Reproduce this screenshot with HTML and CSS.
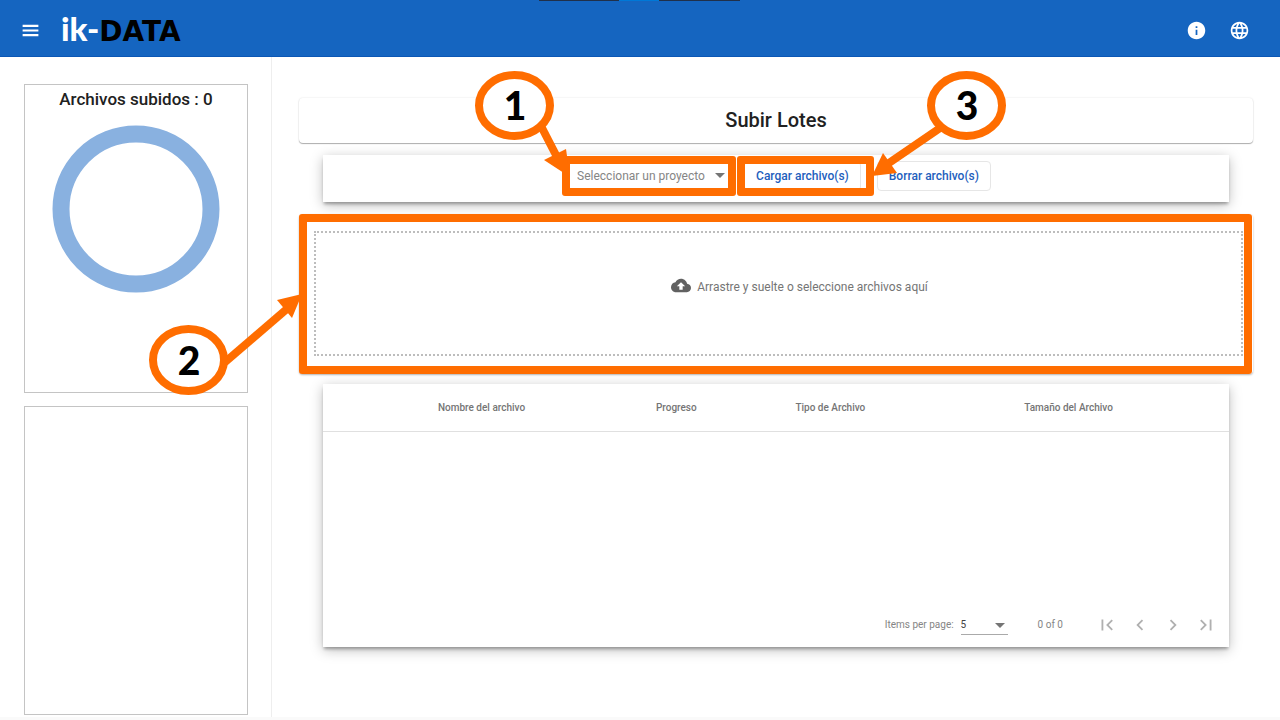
FILE: index.html
```html
<!DOCTYPE html>
<html lang="es">
<head>
<meta charset="utf-8">
<meta name="viewport" content="width=device-width, initial-scale=1">
<title>ik-DATA - Subir Lotes</title>
<link rel="stylesheet" href="styles.css">
</head>
<body>
<header class="topbar">
  <div class="window-tab"></div>
  <button class="icon-button" type="button" aria-label="Menu">
    <svg class="icon" viewBox="0 0 24 24"><path d="M3 18.500h18v-2.500H3v2.500zm0-5.250h18v-2.500H3v2.500zm0-7.750v2.500h18V5.500H3z"/></svg>
  </button>
  <a class="logo" href="#"><span class="logo-ik">ik-</span><span class="logo-data">DATA</span></a>
  <nav class="topbar-actions">
    <button class="icon-button" type="button" aria-label="Info">
      <svg class="icon" viewBox="0 0 24 24"><path d="M12 2C6.48 2 2 6.48 2 12s4.48 10 10 10 10-4.480 10-10S17.520 2 12 2zm1 15h-2v-6h2v6zm0-8h-2V7h2v2z"/></svg>
    </button>
    <button class="icon-button" type="button" aria-label="Idioma">
      <svg class="icon globe" viewBox="0 0 24 24"><path d="M11.990 2C6.470 2 2 6.480 2 12s4.470 10 9.990 10C17.520 22 22 17.520 22 12S17.520 2 11.990 2zm6.930 6h-2.950c-.32-1.250-.78-2.450-1.380-3.560 1.840.63 3.370 1.910 4.330 3.560zM12 4.040c.83 1.200 1.480 2.530 1.910 3.960h-3.820c.43-1.430 1.080-2.760 1.910-3.960zM4.260 14C4.100 13.360 4 12.690 4 12s.1-1.360.26-2h3.380c-.08.66-.14 1.320-.14 2s.06 1.340.14 2H4.260zm.82 2h2.950c.32 1.250.78 2.450 1.380 3.560-1.840-.63-3.370-1.900-4.330-3.560zm2.950-8H5.080c.96-1.660 2.490-2.930 4.330-3.560C8.810 5.550 8.350 6.750 8.030 8zM12 19.960c-.83-1.200-1.480-2.530-1.910-3.960h3.820c-.43 1.430-1.080 2.760-1.910 3.960zM14.340 14H9.660c-.09-.66-.16-1.320-.16-2s.07-1.350.16-2h4.680c.09.65.16 1.320.16 2s-.07 1.340-.16 2zm.25 5.560c.6-1.110 1.060-2.310 1.380-3.560h2.950c-.96 1.650-2.490 2.930-4.330 3.560zM16.360 14c.08-.66.14-1.320.14-2s-.06-1.340-.14-2h3.380c.16.64.26 1.310.26 2s-.1 1.360-.26 2h-3.380z"/></svg>
    </button>
  </nav>
</header>

<div class="page">
  <aside class="sidebar">
    <section class="panel">
      <h2 class="panel-title">Archivos subidos : 0</h2>
      <svg class="donut" viewBox="0 0 168 168" role="img" aria-label="0 archivos"><circle cx="84" cy="84" r="75"/></svg>
    </section>
    <section class="panel"></section>
  </aside>

  <main class="content">
    <h1 class="title-card">Subir Lotes</h1>

    <form class="toolbar card">
      <div class="target project">
        <select class="project-select" aria-label="Proyecto">
          <option>Seleccionar un proyecto</option>
        </select>
        <svg class="caret" viewBox="0 0 10 5"><path d="M0 0h10L5 5z"/></svg>
        <div class="highlight highlight-project">
          <svg class="callout callout-one" viewBox="474 71 100 110">
            <path class="arrow-line" d="M540 126L557 159"/>
            <path class="arrow-head" d="M543 160L565 149L569 177z"/>
            <ellipse cx="513.500" cy="105.500" rx="35.500" ry="30.500"/>
            <text x="514" y="120">1</text>
          </svg>
        </div>
      </div>
      <div class="target">
        <button class="button" type="button">Cargar archivo(s)</button>
        <div class="highlight highlight-upload">
          <svg class="callout callout-three" viewBox="866 71 140 110">
            <path class="arrow-line" d="M943 126L886 165"/>
            <path class="arrow-head" d="M883 153L897 173L872 176z"/>
            <ellipse cx="966.500" cy="105.500" rx="35.500" ry="30.500"/>
            <text x="967" y="120">3</text>
          </svg>
        </div>
      </div>
      <div class="target">
        <button class="button" type="button">Borrar archivo(s)</button>
      </div>
    </form>

    <section class="drop-card">
      <button class="dropzone" type="button">
        <svg class="icon" viewBox="0 0 24 24"><path d="M19.350 10.040C18.670 6.590 15.640 4 12 4 9.110 4 6.600 5.640 5.350 8.040 2.340 8.360 0 10.910 0 14c0 3.310 2.690 6 6 6h13c2.760 0 5-2.240 5-5 0-2.640-2.050-4.780-4.650-4.960zM14 13v4h-4v-4H7l5-5 5 5h-3z"/></svg>
        <span>Arrastre y suelte o seleccione archivos aquí</span>
      </button>
      <div class="highlight highlight-drop">
        <svg class="callout callout-two" viewBox="149 290 154 106">
          <path class="arrow-line" d="M224 363L288 308"/>
          <path class="arrow-head" d="M277 300L292 318L302 294z"/>
          <ellipse cx="188.500" cy="360" rx="35.500" ry="31"/>
          <text x="189" y="375">2</text>
        </svg>
      </div>
    </section>

    <section class="files card">
      <table class="files-table">
        <colgroup><col class="col-name"><col class="col-progress"><col class="col-type"><col class="col-size"></colgroup>
        <thead>
          <tr><th>Nombre del archivo</th><th>Progreso</th><th>Tipo de Archivo</th><th>Tamaño del Archivo</th></tr>
        </thead>
        <tbody></tbody>
      </table>
      <footer class="paginator">
        <label for="page-size">Items per page:</label>
        <div class="page-size">
          <select id="page-size"><option>5</option></select>
          <svg class="caret" viewBox="0 0 10 5"><path d="M0 0h10L5 5z"/></svg>
        </div>
        <span class="range">0 of 0</span>
        <button class="page-button" type="button" aria-label="Primera"><svg viewBox="0 0 24 24"><path d="M18.410 16.590L13.820 12l4.590-4.590L17 6l-6 6 6 6zM6 6h2v12H6z"/></svg></button>
        <button class="page-button" type="button" aria-label="Anterior"><svg viewBox="0 0 24 24"><path d="M15.410 7.410L14 6l-6 6 6 6 1.410-1.410L10.830 12z"/></svg></button>
        <button class="page-button" type="button" aria-label="Siguiente"><svg viewBox="0 0 24 24"><path d="M10 6L8.590 7.410 13.170 12l-4.580 4.590L10 18l6-6z"/></svg></button>
        <button class="page-button" type="button" aria-label="Última"><svg viewBox="0 0 24 24"><path d="M5.590 7.410L10.180 12l-4.590 4.590L7 18l6-6-6-6zM16 6h2v12h-2z"/></svg></button>
      </footer>
    </section>
  </main>
</div>
</body>
</html>
```

FILE: styles.css
```css
* { box-sizing: border-box; }

body {
  margin: 0;
  min-height: 100vh;
  display: flex;
  flex-direction: column;
  padding-bottom: 3px;
  background: #fafafa;
  color: #212121;
  font-family: Roboto, "Liberation Sans", sans-serif;
}

button, select { font: inherit; color: inherit; }
button { padding: 0; border: 0; background: none; cursor: pointer; }
svg { display: block; }

/* Top bar */
.topbar {
  position: relative;
  display: flex;
  align-items: center;
  min-height: 57px;
  padding: 4px 30px 0 20px;
  background: #1565c0;
  border-bottom: 1px solid #0b57b5;
  color: #fff;
}
.window-tab {
  position: absolute;
  top: 0;
  left: 50%;
  width: 201px;
  height: 1px;
  margin-left: -101px;
  background: linear-gradient(90deg, #20304a 80px, #0078d7 80px 120px, #20304a 120px);
}
.icon-button { color: #fff; }
.icon { width: 21px; height: 21px; fill: currentColor; }
.logo {
  display: flex;
  align-items: baseline;
  margin-left: 20px;
  line-height: 40px;
  text-decoration: none;
}
.logo-ik { color: #fff; font: 900 33px/40px Lato, sans-serif; }
.logo-data { color: #000; font: 700 28px/40px "DejaVu Sans", sans-serif; }
.topbar-actions { display: flex; gap: 22px; margin-left: auto; }

/* Page frame */
.page { flex: 1; display: flex; background: #fff; }
.sidebar {
  flex: 0 0 272px;
  display: flex;
  flex-direction: column;
  gap: 13px;
  padding: 27px 23px 2px 24px;
  border-right: 1px solid #eee;
}
.panel {
  flex: 1;
  display: flex;
  flex-direction: column;
  align-items: center;
  border: 1px solid #c4c4c4;
}
.panel-title { margin: 4px 0 16px; font-size: 17px; line-height: 20px; font-weight: 500; }
.donut { width: 168px; height: 168px; fill: none; stroke: #89b1e0; stroke-width: 17px; }
.content { flex: 1; min-width: 0; padding: 41px 27px 40px; }
.title-card {
  margin: 0 0 12px;
  padding: 8px;
  border-radius: 4px;
  background: #fff;
  box-shadow: 0 1px 1px rgba(0, 0, 0, .3), 0 0 2px rgba(0, 0, 0, .12);
  font-size: 20px;
  line-height: 29px;
  font-weight: 500;
  text-align: center;
}
.card {
  margin: 0 24px;
  background: #fff;
  box-shadow: 0 3px 3px -1px rgba(0, 0, 0, .3), 0 3px 12px rgba(0, 0, 0, .26);
}

/* Toolbar */
.toolbar { display: flex; justify-content: center; padding: 6px 0 11px; font-size: 12px; }
.target { position: relative; margin-left: 16px; }
.project { width: 151px; border-bottom: 3px solid #ccc; }
.project-select, .page-size select {
  width: 100%;
  padding: 0;
  border: 0;
  appearance: none;
  background: none;
}
.project-select { height: 27px; padding-top: 2px; color: #858585; }
.caret { position: absolute; width: 10px; height: 5px; fill: #757575; pointer-events: none; }
.project .caret { top: 12px; right: 3px; }
.button {
  display: block;
  height: 30px;
  padding: 0 11px;
  border: 1px solid #e6e6e6;
  border-radius: 4px;
  background: #fff;
  color: #1e60bd;
  font-weight: 500;
}

/* Numbered callouts */
.highlight {
  position: absolute;
  z-index: 1;
  border: 8px solid #ff6d00;
  border-radius: 3px;
  pointer-events: none;
}
.highlight-project { inset: -5px -8px -8px -15px; }
.highlight-upload { inset: -5px -13px -5px -7px; }
.highlight-drop { inset: 0 1px 0 0; }
.callout { position: absolute; overflow: visible; }
.callout-one { top: -93px; left: -95px; width: 100px; height: 110px; }
.callout-two { top: 68px; left: -158px; width: 154px; height: 106px; }
.callout-three { top: -93px; left: 100%; width: 140px; height: 110px; }
.callout ellipse { fill: #fff; stroke: #ff6d00; stroke-width: 8px; }
.arrow-line { stroke: #ff6d00; stroke-width: 8px; }
.arrow-head { fill: #ff6d00; }
.callout text { fill: #000; font: 900 39px Lato, sans-serif; text-anchor: middle; }

/* Drop area */
.drop-card {
  position: relative;
  margin: 12px 0 10px;
  padding: 17px 10px 18px 15px;
  border-radius: 4px;
  background: #fff;
  box-shadow: 0 1px 2px rgba(0, 0, 0, .3);
}
.dropzone {
  display: flex;
  align-items: flex-start;
  justify-content: center;
  gap: 6px;
  width: 100%;
  min-height: 125px;
  padding: 42px 0 0 42px;
  border: 2px dotted #bdbdbd;
  color: #757575;
  font-size: 12px;
  line-height: 24px;
}
.dropzone .icon { width: 20px; color: #616161; }

/* File table */
.files { display: flex; flex-direction: column; min-height: 263px; }
.files-table { width: 100%; table-layout: fixed; border-collapse: collapse; }
.files-table th {
  height: 47px;
  padding: 0;
  border-bottom: 1px solid #e0e0e0;
  color: #757575;
  font-size: 10px;
  font-weight: 500;
  text-align: center;
}
.files-table th:last-child { padding-right: 40px; }
.col-name { width: 35%; }
.col-progress { width: 8%; }
.col-type { width: 26%; }
.paginator {
  display: flex;
  align-items: center;
  justify-content: flex-end;
  margin-top: auto;
  padding: 0 7px 6px;
  color: #858585;
  font-size: 10px;
}
.page-size {
  position: relative;
  width: 47px;
  margin: 0 30px 0 7px;
  border-bottom: 1px solid #aaa;
}
.page-size select { display: block; height: 19px; color: #424242; }
.page-size .caret { top: 8px; right: 3px; }
.range { margin-right: 27px; }
.page-button {
  display: flex;
  align-items: center;
  justify-content: center;
  width: 33px;
  height: 33px;
}
.page-button svg { width: 22px; height: 22px; fill: #b0b0b0; }
```
